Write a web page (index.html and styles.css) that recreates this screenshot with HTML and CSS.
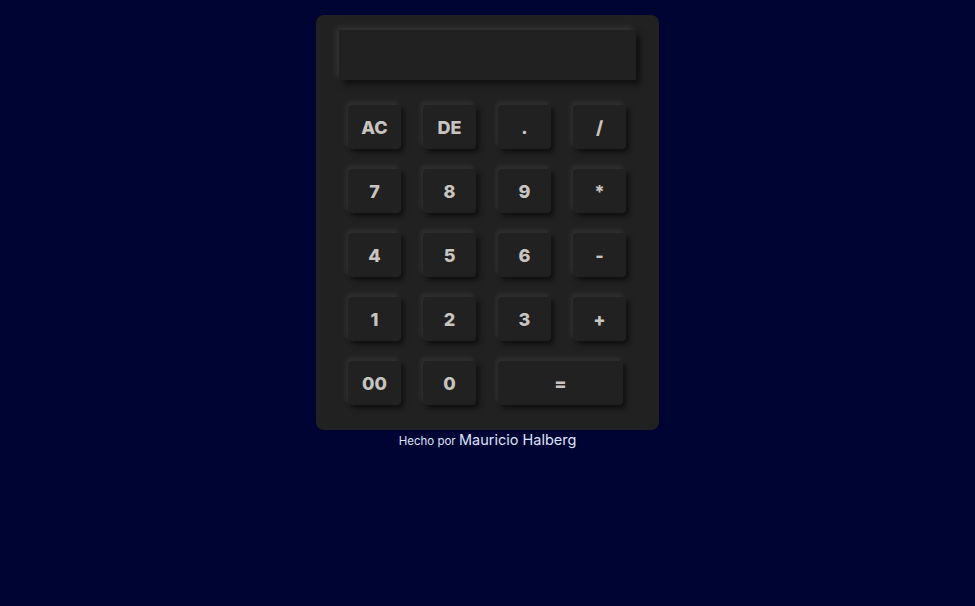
FILE: index.html
```html
<!DOCTYPE html>
<html lang="es">
<head>
<meta charset="utf-8">
<title>Calculadora</title>
<link rel="stylesheet" href="styles.css">
</head>
<body>
<main class="page">
  <div class="calc">
    <div class="display"></div>
    <div class="keys">
      <button class="key">AC</button>
      <button class="key">DE</button>
      <button class="key">.</button>
      <button class="key">/</button>
      <button class="key">7</button>
      <button class="key">8</button>
      <button class="key">9</button>
      <button class="key">*</button>
      <button class="key">4</button>
      <button class="key">5</button>
      <button class="key">6</button>
      <button class="key">-</button>
      <button class="key">1</button>
      <button class="key">2</button>
      <button class="key">3</button>
      <button class="key">+</button>
      <button class="key">00</button>
      <button class="key">0</button>
      <button class="key key-wide">=</button>
    </div>
  </div>
  <p class="credit">Hecho por <span class="author">Mauricio Halberg</span></p>
</main>
</body>
</html>
```

FILE: styles.css
```css
html, body {
  margin: 0;
  padding: 0;
  background: #000433;
  font-family: Inter, "Liberation Sans", sans-serif;
}
.page {
  display: flex;
  flex-direction: column;
  align-items: center;
  padding-top: 15px;
}
.calc {
  width: 343px;
  box-sizing: border-box;
  background: #212121;
  border-radius: 8px;
  padding: 15px 23px 25px 23px;
}
.display {
  height: 50px;
  background: #212121;
  box-shadow: -3px -3px 6px rgba(255,255,255,0.09), 4px 4px 6px rgba(0,0,0,0.55);
}
.keys {
  display: grid;
  grid-template-columns: repeat(4, 53px);
  grid-auto-rows: 44px;
  column-gap: 22px;
  row-gap: 20px;
  margin-top: 25px;
  padding-left: 9px;
}
.key {
  border: none;
  background: #212121;
  border-radius: 4px;
  color: #c8c4c0;
  font-family: Inter, "Liberation Sans", sans-serif;
  font-weight: 800;
  font-size: 18px;
  padding: 0;
  box-shadow: -2px -3px 5px rgba(255,255,255,0.08), 3px 3px 5px rgba(0,0,0,0.55);
}
.key-wide {
  grid-column: span 2;
  width: 125px;
}
.credit {
  margin: 1px 0 0 0;
  color: #dde2fa;
  font-size: 11.5px;
  line-height: 18px;
}
.author {
  font-size: 14.5px;
}
```
